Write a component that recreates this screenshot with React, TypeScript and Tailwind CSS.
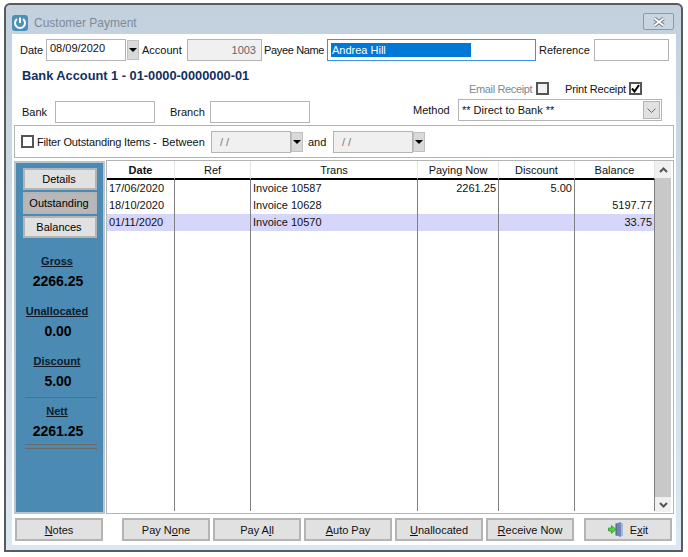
import React from "react";

const font = { fontFamily: '"Liberation Sans", Arial, sans-serif' };

const columns = [
  { title: "Date", w: "w-[68px]", head: "font-bold", align: "text-left pl-[2px]", cells: ["17/06/2020", "18/10/2020", "01/11/2020"] },
  { title: "Ref", w: "w-[76px]", head: "", align: "text-left", cells: ["", "", ""] },
  { title: "Trans", w: "w-[167px]", head: "", align: "text-left pl-[2px]", cells: ["Invoice 10587", "Invoice 10628", "Invoice 10570"] },
  { title: "Paying Now", w: "w-[81px]", head: "", align: "text-right pr-[2px]", cells: ["2261.25", "", ""] },
  { title: "Discount", w: "w-[76px]", head: "", align: "text-right pr-[2px]", cells: ["5.00", "", ""] },
  { title: "Balance", w: "w-[80px]", head: "", align: "text-right pr-[2px]", cells: ["", "5197.77", "33.75"] },
];

function Drop() {
  return (
    <div className="flex h-[20px] w-[12px] items-center justify-center border border-[#c0c0c0] bg-[#d9d9d9]">
      <div className="h-0 w-0 border-x-[4px] border-t-[4px] border-x-transparent border-t-black" />
    </div>
  );
}

function Check({ on, dim }: { on?: boolean; dim?: boolean }) {
  return (
    <div className={`flex h-[13px] w-[13px] shrink-0 items-center justify-center border-2 border-[#555] ${dim ? "bg-[#f0f0f0]" : "bg-white"}`}>
      {on && (
        <svg width="9" height="9" viewBox="0 0 9 9">
          <path d="M1 4.5 L3.5 7.5 L8 1" fill="none" stroke="#000" strokeWidth="2" />
        </svg>
      )}
    </div>
  );
}

function Btn({ children, className = "" }: { children: React.ReactNode; className?: string }) {
  return (
    <div className={`flex h-[23px] w-[88px] items-center justify-center border-2 border-[#b4b4b4] bg-[#e1e1e1] text-[#111] ${className}`}>
      {children}
    </div>
  );
}

function SideBtn({ label, active }: { label: string; active?: boolean }) {
  return (
    <div className={`flex h-[22px] w-[74px] items-center justify-center border-2 border-[#b4b4b4] pr-[2px] text-black ${active ? "bg-[#b8b8b8]" : "bg-[#e1e1e1]"}`}>
      {label}
    </div>
  );
}

function Total({ label, value, className = "" }: { label: string; value: string; className?: string }) {
  return (
    <div className={`flex flex-col items-center pr-[3px] ${className}`}>
      <div className="mr-[2px] h-[14px] leading-[14px] font-bold text-[#0c1c2c] underline">{label}</div>
      <div className="mt-[4px] h-[18px] text-[14px] leading-[18px] font-bold text-black">{value}</div>
    </div>
  );
}

function PowerIcon() {
  return (
    <svg width="16" height="16" viewBox="0 0 16 16">
      <rect width="16" height="16" rx="3" fill="#4a90b8" />
      <path d="M5 4 A5 5 0 1 0 11 4" fill="none" stroke="#fff" strokeWidth="2" />
      <path d="M8 2.5 V8" stroke="#fff" strokeWidth="2" />
    </svg>
  );
}

function ExitIcon() {
  return (
    <svg width="15" height="15" viewBox="0 0 15 15">
      <path d="M8 1.5 L13 0 V15 L8 13.5 Z" fill="#6f86b5" />
      <path d="M13 1 H15 V14 H13 Z" fill="#a9b8d3" />
      <path d="M8 1.5 V13.5" stroke="#46598a" />
      <path d="M0.5 6 H3.5 V3.5 L8 7.5 L3.5 11.5 V9 H0.5 Z" fill="#4fd43c" stroke="#2f9a28" strokeWidth="0.8" />
    </svg>
  );
}

export default function App() {
  return (
    <div className="h-[557px] w-[688px] bg-white pt-[3px] pl-[4px] text-[11px] leading-[14px] whitespace-nowrap text-[#111]" style={font}>
      {/* window frame */}
      <div className="h-[549px] w-[679px] rounded-t-[6px] border-2 border-[#5a5a5a] bg-gradient-to-b from-[#c3d1de] to-[#dbe7f3] px-[6px]">
        <div className="flex h-[29px] items-center pt-[6px]">
          <PowerIcon />
          <span className="ml-[6px] text-[12px] text-[#7d8a96]">Customer Payment</span>
          <div className="mt-[-2px] ml-auto flex h-[17px] w-[31px] translate-x-[-1px] items-center justify-center rounded-[2px] border border-[#8a9aa8] bg-[#c9d6e2]">
            <svg width="14" height="10" viewBox="0 0 14 10">
              <path d="M2.5 1.5 L11.5 8.5 M11.5 1.5 L2.5 8.5" stroke="#66717e" strokeWidth="3.6" />
              <path d="M2.5 1.5 L11.5 8.5 M11.5 1.5 L2.5 8.5" stroke="#fff" strokeWidth="2" />
            </svg>
          </div>
        </div>

        {/* client area */}
        <div className="h-[511px] w-[664px] bg-white">
          <div className="flex h-[27px] items-center pt-[5px] pl-[8px]">
            <span className="w-[26px]">Date</span>
            <div className="flex h-[22px] w-[80px] items-start border border-[#b4b4b4] pt-[1px] pl-[3px]">08/09/2020</div>
            <div className="ml-[1px]"><Drop /></div>
            <span className="ml-[3px] w-[45px]">Account</span>
            <div className="flex h-[22px] w-[75px] items-center justify-end border border-[#b4b4b4] bg-[#f0f0f0] pr-[5px] text-[#666]">1003</div>
            <span className="ml-[2px] w-[63px] tracking-[-0.35px]">Payee Name</span>
            <div className="flex h-[22px] w-[209px] items-center border border-[#3f92e0] pl-[3px]">
              <span className="flex h-[14px] w-[140px] items-center bg-[#0078d7] pl-px text-white">Andrea Hill</span>
            </div>
            <span className="ml-[3px] w-[55px]">Reference</span>
            <div className="h-[22px] w-[75px] border border-[#b4b4b4]" />
          </div>

          <div className="flex h-[64px] justify-between">
            <div className="pl-[10px]">
              <div className="mt-[8px] h-[14px] text-[12.8px] font-bold text-[#12305f]">Bank Account 1 - 01-0000-0000000-01</div>
              <div className="mt-[18px] flex h-[22px] items-center">
                <span className="w-[33px]">Bank</span>
                <div className="h-[22px] w-[100px] border border-[#b4b4b4]" />
                <span className="ml-[15px] w-[40px]">Branch</span>
                <div className="h-[22px] w-[100px] border border-[#b4b4b4]" />
              </div>
            </div>
            <div className="w-[263px] pr-[14px]">
              <div className="mt-[21px] flex h-[13px] items-center">
                <span className="ml-[56px] w-[67px] tracking-[-0.35px] text-[#7c8894]">Email Receipt</span>
                <Check dim />
                <span className="ml-[16px] w-[64px] tracking-[-0.15px]">Print Receipt</span>
                <Check on />
              </div>
              <div className="mt-[4px] flex h-[22px] items-center">
                <span className="w-[45px] pr-0">Method</span>
                <div className="flex h-[22px] w-[204px] items-center border border-[#b4b4b4] pl-[3px]">
                  <span>** Direct to Bank **</span>
                  <div className="mr-[1px] ml-auto flex h-[18px] w-[17px] items-center justify-center border border-[#b4b4b4] bg-[#e1e1e1]">
                    <svg width="9" height="5" viewBox="0 0 9 5"><path d="M0.5 0.5 L4.5 4.5 L8.5 0.5" fill="none" stroke="#666" /></svg>
                  </div>
                </div>
              </div>
            </div>
          </div>

          {/* filter bar */}
          <div className="ml-[2px] flex h-[33px] w-[660px] items-center border border-[#b4b4b4] pl-[6px]">
            <Check />
            <span className="ml-[3px] w-[125px] tracking-[-0.15px]">Filter Outstanding Items -</span>
            <span className="w-[49px]">Between</span>
            <div className="flex h-[22px] w-[80px] items-center border border-[#b4b4b4] bg-[#f0f0f0] pl-[8px] text-[#777]">/ /</div>
            <Drop />
            <span className="ml-[5px] w-[25px]">and</span>
            <div className="flex h-[22px] w-[80px] items-center border border-[#b4b4b4] bg-[#f0f0f0] pl-[8px] text-[#777]">/ /</div>
            <Drop />
          </div>

          <div className="mt-[2px] ml-[2px] flex h-[354px]">
            {/* totals panel */}
            <div className="mt-px h-[353px] w-[91px] border-2 border-[#b9c4cc] bg-[#4a8ab3] pt-[5px]">
              <div className="flex flex-col items-start gap-[2px] pl-[7px]">
                <SideBtn label="Details" />
                <SideBtn label="Outstanding" active />
                <SideBtn label="Balances" />
              </div>
              <Total label="Gross" value="2266.25" className="mt-[16px]" />
              <Total label="Unallocated" value="0.00" className="mt-[14px]" />
              <Total label="Discount" value="5.00" className="mt-[14px]" />
              <div className="mt-[7px] ml-[9px] h-px w-[72px] bg-[#6a6a6a]" />
              <Total label="Nett" value="2261.25" className="mt-[6px]" />
              <div className="mt-[4px] ml-[9px] h-px w-[72px] bg-[#6a6a6a]" />
              <div className="mt-[3px] ml-[9px] h-px w-[72px] bg-[#6a6a6a]" />
            </div>

            {/* invoice grid */}
            <div className="ml-[1px] flex h-[354px] w-[568px] border border-[#b4b4b4] bg-white">
              <div className="flex">
                {columns.map((c) => (
                  <div key={c.title} className={`flex flex-col ${c.w}`}>
                    <div className={`flex h-[19px] items-center justify-center border-r border-b-2 border-r-[#e4e4e4] border-b-black text-[#111] ${c.head}`}>{c.title}</div>
                    <div className="h-[331px] border-r border-[#808080]">
                      {c.cells.map((t, i) => (
                        <div key={i} className={`h-[17px] leading-[17px] text-[#111] ${c.align} ${i === 2 ? "bg-[#d6d6fa]" : ""}`}>{t}</div>
                      ))}
                    </div>
                  </div>
                ))}
              </div>
              <div className="flex h-[351px] w-[16px] flex-col bg-[#c8c8c8]">
                <div className="flex h-[17px] items-center justify-center bg-[#f0f0f0]">
                  <svg width="9" height="6" viewBox="0 0 9 6"><path d="M1 5 L4.5 1.5 L8 5" fill="none" stroke="#555" strokeWidth="2" /></svg>
                </div>
                <div className="mt-auto flex h-[15px] items-center justify-center bg-[#f0f0f0]">
                  <svg width="9" height="6" viewBox="0 0 9 6"><path d="M1 1 L4.5 4.5 L8 1" fill="none" stroke="#555" strokeWidth="2" /></svg>
                </div>
              </div>
            </div>
          </div>

          {/* bottom buttons */}
          <div className="mt-[4px] ml-[3px] flex">
            <Btn><u>N</u>otes</Btn>
            <div className="ml-[19px] flex gap-[3px]">
              <Btn>Pay N<u>o</u>ne</Btn>
              <Btn>Pay A<u>l</u>l</Btn>
              <Btn><u>A</u>uto Pay</Btn>
              <Btn><u>U</u>nallocated</Btn>
              <Btn><u>R</u>eceive Now</Btn>
            </div>
            <Btn className="ml-[10px] gap-[7px]"><ExitIcon /><span>E<u>x</u>it</span></Btn>
          </div>
        </div>
      </div>
    </div>
  );
}
